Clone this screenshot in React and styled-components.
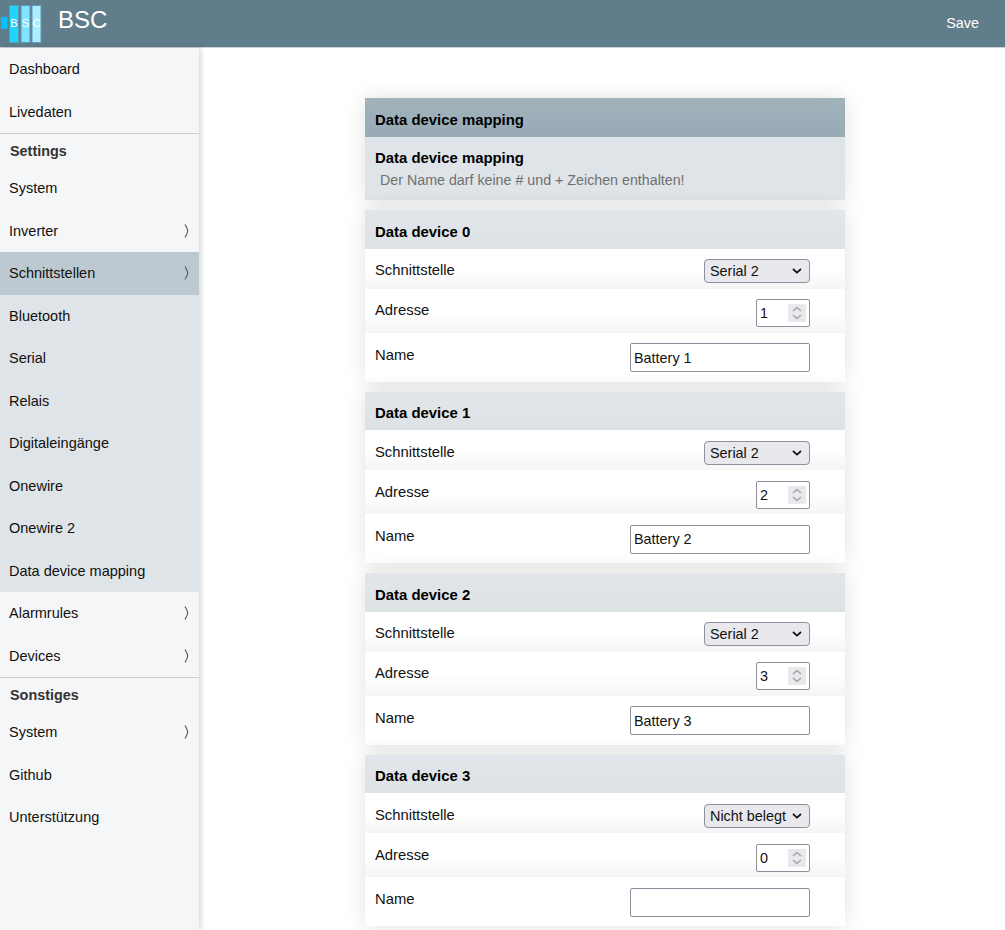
import React from "react"
import styled, { createGlobalStyle } from "styled-components"

const selectArrow =
  "data:image/svg+xml," +
  encodeURIComponent(
    '<svg xmlns="http://www.w3.org/2000/svg" width="10" height="6"><path d="M1 1l4 3.6L9 1" fill="none" stroke="#111" stroke-width="1.7"/></svg>'
  )

const GlobalStyle = createGlobalStyle`
  html, body {
    margin: 0;
    padding: 0;
    height: 930px;
    overflow: hidden;
    background: #fff;
    font-family: "Liberation Sans", Arial, sans-serif;
  }
  * { box-sizing: border-box; }
`

const Header = styled.header`
  height: 48px;
  display: flex;
  align-items: center;
  justify-content: space-between;
  padding: 0 26px 2px 0;
  background: #607d8b;
  border-bottom: 1px solid #c9d2d7;
`

const Brand = styled.div`
  display: flex;
  align-items: center;
  gap: 16px;
  color: #fff;
  font-size: 24px;

  span {
    margin-top: -6px;
  }
`

const SaveButton = styled.button`
  border: 0;
  padding: 0;
  background: none;
  color: #fff;
  font: 14.4px "Liberation Sans", Arial, sans-serif;
`

const Shell = styled.div`
  display: flex;
  height: 882px;
`

const Sidebar = styled.nav`
  flex: 0 0 199px;
  background: #f5f6f8;
  box-shadow: 2px 0 5px rgba(0, 0, 0, 0.16);
  padding-top: 0.2px;
`

const NavItem = styled.div`
  height: 42.5px;
  display: flex;
  align-items: center;
  justify-content: space-between;
  padding: 0 10px 0 9px;
  font-size: 14.5px;
  color: #111;
  background: ${p => (p.$active ? "#bdc9d1" : p.$sub ? "#dfe4e8" : "transparent")};
`

const NavTitle = styled.div`
  height: 34px;
  padding: 8.5px 10px 0;
  font-size: 14.4px;
  font-weight: bold;
  color: #333;
  border-top: 1px solid #ccc;
`

const Main = styled.main`
  flex: 1;
  display: flex;
  justify-content: center;
  padding: 50px 0 0 0;
`

const Column = styled.div`
  width: 480px;
  margin-left: 6px;
  display: flex;
  flex-direction: column;
  gap: 10px;
`

const Card = styled.section`
  background: #fff;
  box-shadow: 0 0 20px rgba(0, 0, 0, 0.12);
`

const CardHeader = styled.div`
  height: ${p => (p.$top ? 39 : 38.5)}px;
  display: flex;
  align-items: center;
  padding: 5px 10px 0;
  font-size: 14.9px;
  font-weight: bold;
  color: #000;
  background: ${p => (p.$top ? "linear-gradient(#a1b2bb, #98abb4)" : "linear-gradient(#e2e6ea, #dde2e5)")};
`

const Intro = styled.div`
  height: 63px;
  padding: 13px 10px 0;
  background: #dfe4e8;
`

const IntroTitle = styled.div`
  font-size: 14.9px;
  font-weight: bold;
  color: #000;
`

const IntroText = styled.div`
  margin: 6px 0 0 5px;
  font-size: 14.25px;
  color: #707070;
`

const Row = styled.div`
  display: flex;
  align-items: flex-start;
  justify-content: space-between;
  height: ${p => p.$height}px;
  padding: 10.5px 35px 0 10px;
  font-size: 14.8px;
  color: #111;
  background: linear-gradient(#fff 50%, ${p => (p.$last ? "#fff" : "#f5f5f5")});
`

const Label = styled.span`
  margin-top: ${p => p.$offset}px;
`

const Select = styled.select`
  appearance: none;
  height: 24px;
  width: 106px;
  font: 14.4px "Liberation Sans", Arial, sans-serif;
  padding: 0 0 0 5px;
  color: #111;
  background: #e9e9ed url("${selectArrow}") no-repeat right 7px center;
  border: 1px solid #8f8f9d;
  border-radius: 4px;
`

const TextInput = styled.input`
  display: block;
  width: ${p => p.$width}px;
  height: ${p => (p.type === "number" ? 28 : 29)}px;
  font: 14.4px "Liberation Sans", Arial, sans-serif;
  padding: 1px 3px;
  color: #111;
  background: #fff;
  border: 1px solid #8f8f9d;
  border-radius: 2px;
  appearance: textfield;

  &::-webkit-inner-spin-button {
    appearance: none;
  }
`

const NumberField = styled.div`
  position: relative;
`

const Spinner = styled.svg`
  position: absolute;
  top: 5px;
  right: 4px;
  pointer-events: none;
`

const Chevron = () => (
  <svg width="5" height="14" viewBox="0 0 5 14">
    <path d="M1 0.5C2.6 3.5 3.7 5.2 3.7 7S2.6 10.5 1 13.5" fill="none" stroke="#555" strokeWidth="1.1" />
  </svg>
)

const SpinnerIcon = () => (
  <Spinner width="18" height="18" viewBox="0 0 18 18">
    <rect width="18" height="18" fill="#e9e9ed" />
    <path d="M5 7l4-3.5L13 7M5 11l4 3.5 4-3.5" fill="none" stroke="#a3a3ab" strokeWidth="1.6" />
  </Spinner>
)

const Logo = () => (
  <svg width="42" height="42" viewBox="0 0 42 42">
    <rect x="1" y="15" width="6.5" height="12" fill="#00c3ff" stroke="#4f95ad" strokeWidth="0.6" />
    <rect x="9.5" y="3.5" width="9" height="37" fill="#22d3ff" stroke="#5b9ab0" />
    <rect x="21" y="3.5" width="9" height="37" fill="#80e3ff" stroke="#5b9ab0" />
    <rect x="32" y="3.5" width="9" height="37" fill="#abeeff" stroke="#5b9ab0" />
    <g fontSize="11" fill="#fff" fontFamily="Liberation Sans" textAnchor="middle">
      <text x="14" y="25">B</text>
      <text x="25.5" y="25">S</text>
      <text x="36.5" y="25">C</text>
    </g>
  </svg>
)

const devices = [
  { id: 0, port: "Serial 2", address: 1, name: "Battery 1" },
  { id: 1, port: "Serial 2", address: 2, name: "Battery 2" },
  { id: 2, port: "Serial 2", address: 3, name: "Battery 3" },
  { id: 3, port: "Nicht belegt", address: 0, name: "" },
]

const App = () => {
  return (
    <>
      <GlobalStyle />
      <Header>
        <Brand>
          <Logo />
          <span>BSC</span>
        </Brand>
        <SaveButton>Save</SaveButton>
      </Header>
      <Shell>
        <Sidebar>
          <NavItem>Dashboard</NavItem>
          <NavItem>Livedaten</NavItem>
          <NavTitle>Settings</NavTitle>
          <NavItem>System</NavItem>
          <NavItem>Inverter<Chevron /></NavItem>
          <NavItem $active>Schnittstellen<Chevron /></NavItem>
          {["Bluetooth", "Serial", "Relais", "Digitaleingänge", "Onewire", "Onewire 2", "Data device mapping"].map(item => (
            <NavItem $sub key={item}>{item}</NavItem>
          ))}
          <NavItem>Alarmrules<Chevron /></NavItem>
          <NavItem>Devices<Chevron /></NavItem>
          <NavTitle>Sonstiges</NavTitle>
          <NavItem>System<Chevron /></NavItem>
          <NavItem>Github</NavItem>
          <NavItem>Unterstützung</NavItem>
        </Sidebar>
        <Main>
          <Column>
            <Card>
              <CardHeader $top>Data device mapping</CardHeader>
              <Intro>
                <IntroTitle>Data device mapping</IntroTitle>
                <IntroText>Der Name darf keine # und + Zeichen enthalten!</IntroText>
              </Intro>
            </Card>
            {devices.map(device => (
              <Card key={device.id}>
                <CardHeader>Data device {device.id}</CardHeader>
                <Row $height={40}>
                  <Label $offset={3}>Schnittstelle</Label>
                  <Select defaultValue={device.port}>
                    <option>Serial 2</option>
                    <option>Nicht belegt</option>
                  </Select>
                </Row>
                <Row $height={44}>
                  <Label $offset={3}>Adresse</Label>
                  <NumberField>
                    <TextInput type="number" $width={54} defaultValue={device.address} />
                    <SpinnerIcon />
                  </NumberField>
                </Row>
                <Row $height={49} $last>
                  <Label $offset={3.5}>Name</Label>
                  <TextInput type="text" $width={180} defaultValue={device.name} />
                </Row>
              </Card>
            ))}
          </Column>
        </Main>
      </Shell>
    </>
  )
}

export default App
